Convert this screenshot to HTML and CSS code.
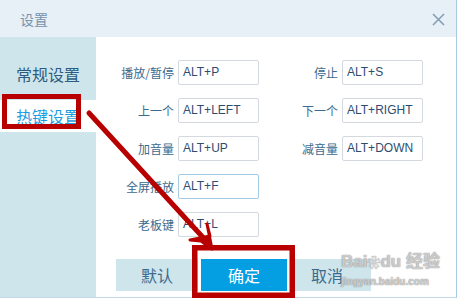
FILE: index.html
```html
<!DOCTYPE html>
<html lang="zh">
<head>
<meta charset="utf-8">
<title>设置</title>
<link rel="stylesheet" href="styles.css">
</head>
<body>
<div class="dialog">
  <div class="titlebar">
    <span class="title">设置</span>
    <svg class="close" width="13" height="13" viewBox="0 0 13 13"><path d="M1 1 L12 12 M12 1 L1 12" stroke="#7f9db5" stroke-width="1.5" fill="none"/></svg>
  </div>
  <div class="main">
    <nav class="sidebar">
      <div class="nav-item">常规设置</div>
      <div class="nav-item active">热键设置</div>
    </nav>
    <section class="content">
      <div class="form">
        <label class="lbl">播放/暂停</label><div class="field">ALT+P</div>
        <label class="lbl">停止</label><div class="field">ALT+S</div>
        <label class="lbl">上一个</label><div class="field">ALT+LEFT</div>
        <label class="lbl">下一个</label><div class="field">ALT+RIGHT</div>
        <label class="lbl">加音量</label><div class="field">ALT+UP</div>
        <label class="lbl">减音量</label><div class="field">ALT+DOWN</div>
        <label class="lbl">全屏播放</label><div class="field focus">ALT+F</div>
        <span></span><span></span>
        <label class="lbl">老板键</label><div class="field">ALT+L</div>
      </div>
      <div class="buttons">
        <div class="btn btn-default">默认</div>
        <div class="btn btn-ok">确定</div>
        <div class="btn btn-cancel">取消</div>
      </div>
    </section>
  </div>
</div>
<div class="watermark">
  <div class="wm-top">Bai<span class="paw">❀</span>du 经验</div>
  <div class="wm-bottom">jingyan.baidu.com</div>
</div>
<svg class="annot" width="459" height="300" viewBox="0 0 459 300">
  <rect x="4.5" y="96.5" width="74" height="30" fill="none" stroke="#b80000" stroke-width="5"/>
  <rect x="194.75" y="247.75" width="97.5" height="47.5" fill="none" stroke="#b80000" stroke-width="5.5"/>
  <line x1="89" y1="113" x2="209" y2="244" stroke="#b80000" stroke-width="5" stroke-linecap="round"/>
  <polygon points="212,249 207,224 210,236 190,240 201,241" fill="#b80000" stroke="#b80000" stroke-width="3" stroke-linejoin="round"/>
</svg>
</body>
</html>
```
FILE: styles.css
```css
* { box-sizing: border-box; }
html, body { margin: 0; padding: 0; }
body {
  width: 459px;
  height: 300px;
  background: #ffffff;
  position: relative;
  overflow: hidden;
  font-family: "Liberation Sans", "Noto Sans CJK SC", sans-serif;
}
.dialog {
  width: 457px;
  height: 298px;
  border-right: 1px solid #a9cbe0;
  border-bottom: 1px solid #c3d8e5;
  display: flex;
  flex-direction: column;
}
.titlebar {
  height: 37px;
  flex: none;
  background: #e7eff7;
  display: flex;
  align-items: center;
  justify-content: space-between;
  padding: 0 11px 0 20px;
}
.title {
  font-family: "Noto Sans CJK SC", sans-serif;
  font-size: 14px;
  color: #7593ad;
  line-height: 16px;
  margin-top: 1px;
}
.close { display: block; margin-top: 1px; }
.main {
  flex: 1;
  display: flex;
}
.sidebar {
  width: 96px;
  flex: none;
  background: #cfe5ec;
  padding-top: 21px;
  display: flex;
  flex-direction: column;
  gap: 10px;
}
.nav-item {
  height: 32px;
  line-height: 32px;
  padding-left: 16px;
  font-family: "Noto Sans CJK SC", sans-serif;
  font-size: 16px;
  color: #2c5d80;
}
.nav-item.active {
  background: #ffffff;
  color: #1b9be0;
}
.content {
  flex: 1;
  padding-top: 23px;
  display: flex;
  flex-direction: column;
}
.form {
  display: grid;
  grid-template-columns: 78px 81px 75px 81px;
  grid-auto-rows: 25px;
  column-gap: 4px;
  row-gap: 13px;
}
.lbl {
  text-align: right;
  font-family: "Noto Sans CJK SC", sans-serif;
  font-size: 12px;
  line-height: 25px;
  color: #3c6a8d;
  white-space: nowrap;
}
.field {
  border: 1px solid #d4d8df;
  border-radius: 2px;
  padding-left: 4px;
  font-size: 12px;
  line-height: 23px;
  color: #2d4d70;
  white-space: nowrap;
  overflow: hidden;
}
.field.focus { border-color: #a3cbe6; }
.buttons {
  margin-top: 22px;
  margin-left: 20px;
  display: flex;
  height: 32px;
}
.btn {
  height: 32px;
  line-height: 32px;
  text-align: center;
  font-family: "Noto Sans CJK SC", sans-serif;
  font-size: 16px;
}
.btn-default {
  width: 82px;
  background: #cfe5ec;
  color: #3a6a8c;
}
.btn-ok {
  width: 86px;
  margin-left: 3px;
  background: #049ee3;
  color: #ffffff;
}
.btn-cancel {
  width: 76px;
  margin-left: 8px;
  background: #cfe5ec;
  color: #3a6a8c;
  padding-right: 12px;
}
.watermark {
  position: absolute;
  left: 341px;
  top: 252px;
  width: 92px;
  color: rgba(255,255,255,0.6);
  text-shadow: 0 0 1px rgba(110,110,110,0.8), 0 0 1px rgba(110,110,110,0.6);
  font-family: "Liberation Sans", "Noto Sans CJK SC", sans-serif;
  font-weight: bold;
}
.wm-top { font-size: 17px; line-height: 20px; white-space: nowrap; }
.paw { font-size: 13px; }
.wm-bottom { font-size: 10px; line-height: 14px; margin-top: 2px; white-space: nowrap; }
.annot {
  position: absolute;
  left: 0;
  top: 0;
  pointer-events: none;
}
```
